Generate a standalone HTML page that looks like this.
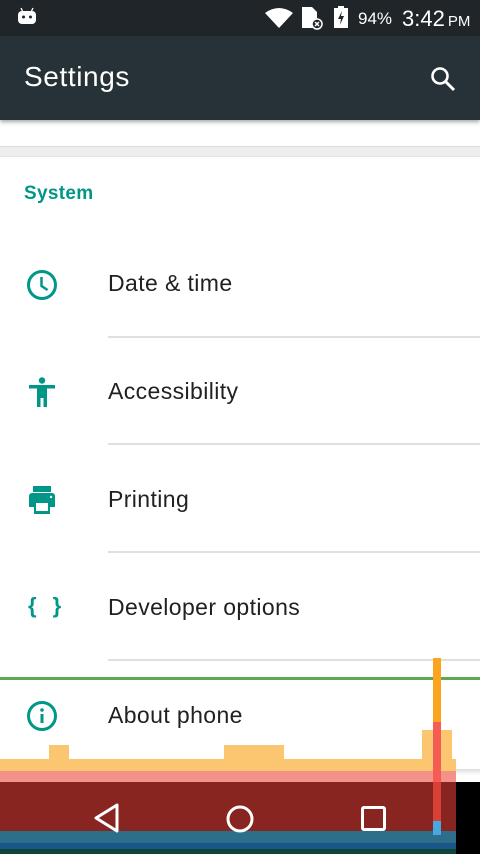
<!DOCTYPE html>
<html><head><meta charset="utf-8"><style>
*{margin:0;padding:0;box-sizing:border-box}
body{width:480px;height:854px;overflow:hidden;background:#fff;font-family:"Liberation Sans",sans-serif;position:relative}
.abs{position:absolute}
#sb{left:0;top:0;width:480px;height:36px;background:#202529;color:#fff}
#tb{left:0;top:36px;width:480px;height:84px;background:#263238;box-shadow:0 2px 4px rgba(0,0,0,.35)}
.item{position:absolute;left:108px;font-size:23px;letter-spacing:0.4px;color:#212121}
.div{position:absolute;left:108px;width:372px;height:2px;background:#e0e0e0}
.ic{position:absolute;left:26px}
</style></head><body>
<div id="sb" class="abs">
 <svg class="abs" style="left:17px;top:7px" width="20" height="20" viewBox="0 0 20 20"><path d="M4 1l1.5 3M16 1l-1.5 3" stroke="#fff" stroke-width="1.3"/><rect x="1" y="4" width="18" height="13" rx="4" fill="#fff"/><circle cx="6.5" cy="10" r="1.5" fill="#202529"/><circle cx="13.5" cy="10" r="1.5" fill="#202529"/></svg>
 <svg class="abs" style="left:265px;top:7px" width="28" height="21" viewBox="0 0 28 21"><path d="M0 6Q14-4 28 6L14 21Z" fill="#fff"/></svg>
 <svg class="abs" style="left:302px;top:7px" width="22" height="23" viewBox="0 0 22 23"><path d="M0 0h10l5 5v16H0Z" fill="#fff"/><circle cx="15" cy="17" r="5" fill="#202529" stroke="#fff" stroke-width="1.5"/><path d="M13 15l4 4M17 15l-4 4" stroke="#fff" stroke-width="1.5"/></svg>
 <svg class="abs" style="left:334px;top:6px" width="14" height="22" viewBox="0 0 14 22"><rect x="4" y="0" width="6" height="3" fill="#fff"/><rect x="0" y="2" width="14" height="20" fill="#fff"/><path d="M8 5L4 13h3l-1 6 4-9H7z" fill="#202529"/></svg>
 <div class="abs" style="left:358px;top:9px;font-size:17px">94%</div>
 <div class="abs" style="left:402px;top:6px;font-size:22px">3:42<span style="font-size:15px;margin-left:3px">PM</span></div>
</div>
<div id="tb" class="abs">
 <div class="abs" style="left:24px;top:25px;color:#fff;font-size:28px;letter-spacing:0.6px">Settings</div>
 <svg class="abs" style="left:428px;top:28px" width="30" height="30" viewBox="0 0 30 30"><circle cx="12" cy="12" r="7.5" fill="none" stroke="#fff" stroke-width="2.6"/><path d="M17.5 17.5L26 26" stroke="#fff" stroke-width="3"/></svg>
</div>
<div class="abs" style="left:0;top:146px;width:480px;height:11px;background:#eeeeee;border-top:1px solid #ddd;border-bottom:1px solid #e4e4e4"></div>
<div class="abs" style="left:24px;top:183px;font-size:19px;font-weight:bold;color:#009688;letter-spacing:0.3px">System</div>

<svg class="ic" style="top:269px" width="32" height="32" viewBox="0 0 32 32"><circle cx="16" cy="16" r="13.5" fill="none" stroke="#009688" stroke-width="3"/><path d="M15.5 8v9l6 4" fill="none" stroke="#009688" stroke-width="2.5"/></svg>
<div class="item" style="top:270px">Date &amp; time</div>
<div class="div" style="top:336px"></div>

<svg class="ic" style="top:376px" width="32" height="32" viewBox="0 0 32 32"><circle cx="16" cy="4.5" r="3.2" fill="#009688"/><path d="M3 9h26v3.5h-8V31h-3.5v-9h-3v9H11V12.5H3z" fill="#009688"/></svg>
<div class="item" style="top:378px">Accessibility</div>
<div class="div" style="top:443px"></div>

<svg class="ic" style="top:484px" width="32" height="32" viewBox="0 0 32 32"><rect x="7" y="2" width="18" height="6" fill="#009688"/><path d="M3 12a3 3 0 0 1 3-3h20a3 3 0 0 1 3 3v11h-5v7H8v-7H3z" fill="#009688"/><rect x="10" y="19" width="12" height="8" fill="#fff"/><circle cx="25" cy="13" r="1.2" fill="#fff"/></svg>
<div class="item" style="top:486px">Printing</div>
<div class="div" style="top:551px"></div>

<div class="ic" style="top:593px;left:28px;color:#009688;font-size:22px;font-weight:bold;letter-spacing:5px">{ }</div>
<div class="item" style="top:594px">Developer options</div>
<div class="div" style="top:659px"></div>

<div class="abs" style="left:0;top:677px;width:480px;height:3px;background:#60a850"></div>
<svg class="ic" style="top:700px" width="32" height="32" viewBox="0 0 32 32"><circle cx="16" cy="16" r="13.5" fill="none" stroke="#009688" stroke-width="3"/><rect x="14.5" y="14" width="3" height="9" fill="#009688"/><circle cx="16" cy="10" r="1.8" fill="#009688"/></svg>
<div class="item" style="top:702px">About phone</div>

<div class="abs" style="left:0;top:769px;width:480px;height:6px;background:linear-gradient(#ddd,#fff)"></div>
<div class="abs" style="left:0;top:759px;width:456px;height:23px;background:#fcc56f"></div>
<div class="abs" style="left:0;top:771px;width:456px;height:11px;background:#f2928a"></div>
<div class="abs" style="left:49px;top:745px;width:20px;height:26px;background:#fcc56f"></div>
<div class="abs" style="left:224px;top:745px;width:60px;height:14px;background:#fcc56f"></div>
<div class="abs" style="left:422px;top:730px;width:30px;height:30px;background:#fcc56f"></div>
<div class="abs" style="left:433px;top:658px;width:8px;height:196px;background:#fca420"></div>
<div class="abs" style="left:433px;top:722px;width:8px;height:132px;background:#f45c54"></div>
<div class="abs" style="left:0;top:782px;width:456px;height:72px;background:#882520"></div>
<div class="abs" style="left:456px;top:782px;width:24px;height:72px;background:#000"></div>
<div class="abs" style="left:0;top:831px;width:456px;height:12px;background:#2d6e8a"></div>
<div class="abs" style="left:0;top:843px;width:456px;height:6px;background:#1a568a"></div>
<div class="abs" style="left:0;top:849px;width:456px;height:5px;background:#0d4638"></div>
<div class="abs" style="left:433px;top:782px;width:8px;height:40px;background:#d94035"></div>
<div class="abs" style="left:433px;top:821px;width:8px;height:14px;background:#45a8e0"></div>
<svg class="abs" style="left:92px;top:802px" width="30" height="32" viewBox="0 0 30 32"><path d="M25 3L4 16l21 13z" fill="none" stroke="#fff" stroke-width="3" stroke-linejoin="round"/></svg>
<svg class="abs" style="left:225px;top:804px" width="30" height="30" viewBox="0 0 30 30"><circle cx="15" cy="15" r="12" fill="none" stroke="#fff" stroke-width="3"/></svg>
<svg class="abs" style="left:361px;top:806px" width="26" height="26" viewBox="0 0 26 26"><rect x="1.5" y="1.5" width="22" height="22" rx="1.5" fill="none" stroke="#fff" stroke-width="3"/></svg>
</body></html>
